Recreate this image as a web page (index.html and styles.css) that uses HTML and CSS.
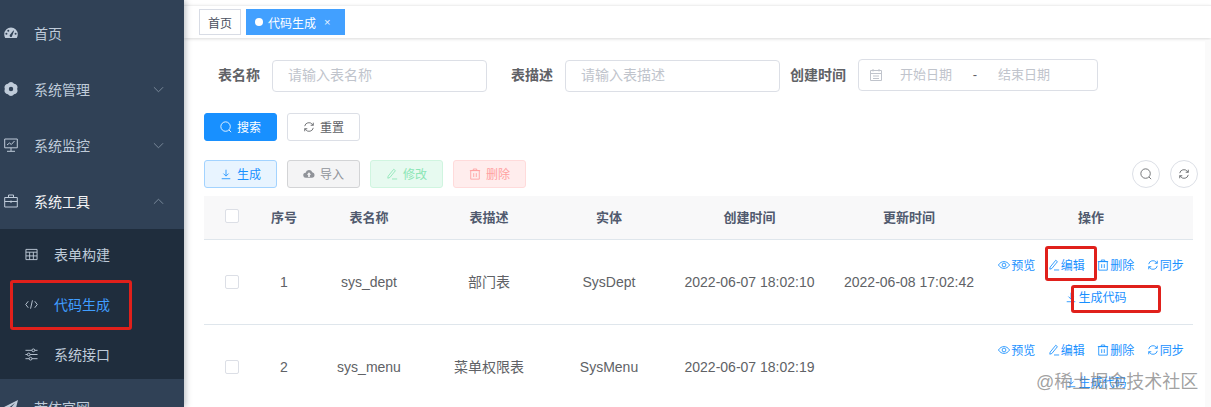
FILE: index.html
```html
<!DOCTYPE html>
<html lang="zh-CN">
<head>
    <meta charset="UTF-8">
    <title>代码生成</title>
    <link rel="stylesheet" href="styles.css">
</head>
<body>
    <svg class="sprite" width="0" height="0">
        <symbol id="i-search" viewBox="0 0 14 14"><circle cx="6.500" cy="6.500" r="5.500"/><path d="M10.500 10.500l2.500 2.500"/></symbol>
        <symbol id="i-refresh" viewBox="0 0 14 14"><path d="M2 6a5 5 0 0 1 8.800-2.200L12 5M12 2v3H9M12 8a5 5 0 0 1-8.800 2.200L2 9M2 12V9h3"/></symbol>
        <symbol id="i-download" viewBox="0 0 14 14"><path d="M7 2v7M4 6.500L7 9.500l3-3M2 12.500h10"/></symbol>
        <symbol id="i-edit" viewBox="0 0 14 14"><path d="M2.500 9.500L9 1.500l2 1.600-6.500 8-2.400.8zM7 12.800h6"/></symbol>
        <symbol id="i-delete" viewBox="0 0 14 14"><path d="M2 3h10v10H2zM1 3h12M5 3V1.200h4V3M5.500 6v4.500M8.500 6v4.500"/></symbol>
        <symbol id="i-view" viewBox="0 0 14 14"><path d="M.5 7C2.300 4.300 4.500 3 7 3s4.700 1.300 6.500 4C11.700 9.700 9.500 11 7 11S2.300 9.700.5 7z"/><circle cx="7" cy="7" r="2.200"/></symbol>
        <symbol id="i-date" viewBox="0 0 14 14"><path d="M1.500 2.500h11v10h-11zM1.500 5.500h11M4 1v2.500M10 1v2.500M4 8h6M4 10.500h6"/></symbol>
        <symbol id="i-down" viewBox="0 0 12 12"><path d="M1 3.500l5 5 5-5"/></symbol>
        <symbol id="i-up" viewBox="0 0 12 12"><path d="M1 8.500l5-5 5 5"/></symbol>
    </svg>

    <div class="app">
        <div class="sidebar">
            <div class="menu-item">
                <svg class="menu-icon" viewBox="0 0 14 14"><path class="solid" d="M7 1.500a6.800 6.800 0 0 0-6.800 6.800c0 1.500.4 2.700 1 3.700h11.600c.6-1 1-2.200 1-3.700A6.800 6.800 0 0 0 7 1.500zM2.400 8.800a1 1 0 1 1 0-2 1 1 0 0 1 0 2zm1.900-3a1 1 0 1 1 0-2 1 1 0 0 1 0 2zm3.500 5a1.400 1.400 0 0 1-2-1.800l3.600-4.600.7.300zm3.800-2a1 1 0 1 1 0-2 1 1 0 0 1 0 2z"/></svg>
                <span>首页</span>
            </div>
            <div class="menu-item">
                <svg class="menu-icon" viewBox="0.700 0.700 12.600 12.600"><path class="solid" fill-rule="evenodd" d="M9.750 2.240A3.300 3.300 0 0 1 12.500 7 3.300 3.300 0 0 1 9.750 11.760 3.300 3.300 0 0 1 4.250 11.760 3.300 3.300 0 0 1 1.500 7 3.300 3.300 0 0 1 4.250 2.240 3.300 3.300 0 0 1 9.750 2.240zM7 5a2 2 0 1 0 0 4 2 2 0 0 0 0-4z"/></svg>
                <span>系统管理</span>
                <svg class="chevron"><use href="#i-down"/></svg>
            </div>
            <div class="menu-item">
                <svg class="menu-icon" viewBox="0 0 14 14"><path d="M.7 1h12.600v8.800H.7zM7 9.800v3.400M3 13.300h8M3 7l2.500-2 1.800 1.500L10.500 3"/></svg>
                <span>系统监控</span>
                <svg class="chevron"><use href="#i-down"/></svg>
            </div>
            <div class="menu-item open">
                <svg class="menu-icon" viewBox="0 0 14 14"><path d="M.7 3.500h12.600v9.500H.7zM4.500 3.500V1h5v2.500M.7 7.500h12.600M7 6.500v2.500"/></svg>
                <span>系统工具</span>
                <svg class="chevron"><use href="#i-up"/></svg>
            </div>
            <div class="submenu">
                <div class="sub-item">
                    <svg class="sub-icon" viewBox="0 0 14 14"><path d="M1 1.500h12v11H1zM1 4.500h12M1 8.500h12M5 4.500v8M9 4.500v8"/></svg>
                    <span>表单构建</span>
                </div>
                <div class="sub-item active">
                    <svg class="sub-icon" viewBox="0 0 14 14"><path d="M3.500 3.500L.8 7l2.700 3.500M10.500 3.500L13.200 7l-2.700 3.500M8 2.500L6 11.500"/></svg>
                    <span>代码生成</span>
                </div>
                <div class="sub-item">
                    <svg class="sub-icon" viewBox="0 0 14 14"><path d="M.5 2.500h13M.5 7h13M.5 11.500h13"/><circle class="knob" cx="9" cy="2.500" r="1.500"/><circle class="knob" cx="4" cy="7" r="1.500"/><circle class="knob" cx="6" cy="11.500" r="1.500"/></svg>
                    <span>系统接口</span>
                </div>
            </div>
            <div class="menu-item">
                <svg class="menu-icon" viewBox="0 0 14 14"><path class="solid" d="M14 0L0 7l3.800 1.500L11 3 5.500 9.500V14l2.400-3 3 1.200z"/></svg>
                <span>若依官网</span>
            </div>
        </div>

        <div class="main">
            <div class="tags-bar">
                <span class="tag">首页</span>
                <span class="tag tag-active"><i class="tag-dot"></i>代码生成<em class="tag-close">×</em></span>
            </div>

            <div class="content">
                <div class="search-form">
                    <label>表名称</label>
                    <div class="input">请输入表名称</div>
                    <label>表描述</label>
                    <div class="input">请输入表描述</div>
                    <label>创建时间</label>
                    <div class="input date-range">
                        <svg class="ic date-icon"><use href="#i-date"/></svg>
                        <span class="date-cell">开始日期</span>
                        <span class="date-sep">-</span>
                        <span class="date-cell">结束日期</span>
                    </div>
                </div>

                <div class="btn-row search-btns">
                    <div class="btn btn-primary"><svg class="ic"><use href="#i-search"/></svg>搜索</div>
                    <div class="btn"><svg class="ic"><use href="#i-refresh"/></svg>重置</div>
                </div>

                <div class="btn-row tool-btns">
                    <div class="btn plain-blue"><svg class="ic"><use href="#i-download"/></svg>生成</div>
                    <div class="btn plain-gray">
                        <svg class="ic" viewBox="0 0 14 14"><path class="solid" fill-rule="evenodd" d="M3.500 11.500a3 3 0 0 1-.4-6A4 4 0 0 1 10.800 5a3.300 3.300 0 0 1 0 6.500zM7 5L4.500 8H6v2.500h2V8h1.500z"/></svg>导入
                    </div>
                    <div class="btn plain-green"><svg class="ic"><use href="#i-edit"/></svg>修改</div>
                    <div class="btn plain-red"><svg class="ic"><use href="#i-delete"/></svg>删除</div>
                    <div class="tool-right">
                        <div class="circle-btn"><svg class="ic"><use href="#i-search"/></svg></div>
                        <div class="circle-btn"><svg class="ic"><use href="#i-refresh"/></svg></div>
                    </div>
                </div>

                <table class="gen-table">
                    <colgroup>
                        <col class="c-check"><col class="c-no"><col class="c-name"><col class="c-desc">
                        <col class="c-entity"><col class="c-create"><col class="c-update"><col class="c-ops">
                    </colgroup>
                    <thead>
                        <tr>
                            <th><i class="check"></i></th>
                            <th>序号</th>
                            <th>表名称</th>
                            <th>表描述</th>
                            <th>实体</th>
                            <th>创建时间</th>
                            <th>更新时间</th>
                            <th>操作</th>
                        </tr>
                    </thead>
                    <tbody>
                        <tr>
                            <td><i class="check"></i></td>
                            <td>1</td>
                            <td>sys_dept</td>
                            <td class="td-cn">部门表</td>
                            <td>SysDept</td>
                            <td>2022-06-07 18:02:10</td>
                            <td>2022-06-08 17:02:42</td>
                            <td class="td-ops">
                                <div class="ops-line">
                                    <a><svg class="ic"><use href="#i-view"/></svg>预览</a>
                                    <a><svg class="ic"><use href="#i-edit"/></svg>编辑</a>
                                    <a><svg class="ic"><use href="#i-delete"/></svg>删除</a>
                                    <a><svg class="ic"><use href="#i-refresh"/></svg>同步</a>
                                </div>
                                <div class="ops-line ops-gen">
                                    <a><svg class="ic"><use href="#i-download"/></svg>生成代码</a>
                                </div>
                            </td>
                        </tr>
                        <tr>
                            <td><i class="check"></i></td>
                            <td>2</td>
                            <td>sys_menu</td>
                            <td class="td-cn">菜单权限表</td>
                            <td>SysMenu</td>
                            <td>2022-06-07 18:02:19</td>
                            <td></td>
                            <td class="td-ops">
                                <div class="ops-line">
                                    <a><svg class="ic"><use href="#i-view"/></svg>预览</a>
                                    <a><svg class="ic"><use href="#i-edit"/></svg>编辑</a>
                                    <a><svg class="ic"><use href="#i-delete"/></svg>删除</a>
                                    <a><svg class="ic"><use href="#i-refresh"/></svg>同步</a>
                                </div>
                                <div class="ops-line ops-gen">
                                    <a><svg class="ic"><use href="#i-download"/></svg>生成代码</a>
                                </div>
                            </td>
                        </tr>
                    </tbody>
                </table>
            </div>
            <div class="scroll-track"></div>
        </div>
    </div>

    <!-- red marks drawn over the screenshot -->
    <div class="mark mark-menu"></div>
    <div class="mark mark-edit"></div>
    <div class="mark mark-gen"></div>
    <div class="watermark">@稀土掘金技术社区</div>
</body>
</html>
```

FILE: styles.css
```css
* {
    box-sizing: border-box;
}

html, body {
    margin: 0;
    padding: 0;
    height: 407px;
    overflow: hidden;
}

body {
    font-family: "Liberation Sans", "Noto Sans CJK SC", sans-serif;
    font-size: 14px;
    color: #606266;
    background-color: #fff;
}

.sprite {
    display: none;
}

.app {
    display: flex;
    height: 407px;
}

/* sidebar */
.sidebar {
    flex: none;
    width: 184px;
    padding-top: 5px;
    background-color: #304156;
    color: #bfcbd9;
    overflow: hidden;
    box-shadow: 2px 0 6px rgba(0, 21, 41, .25);
    z-index: 2;
}

.menu-item {
    display: flex;
    align-items: center;
    height: 56px;
    padding-left: 4px;
    flex: none;
}

.menu-item.open {
    color: #f4f4f5;
}

.menu-icon {
    flex: none;
    width: 14px;
    height: 14px;
    margin-right: 16px;
    fill: none;
    stroke: #bfcbd9;
    stroke-width: 1;
}

.solid {
    fill: #bfcbd9;
    stroke: none;
}

.chevron {
    width: 11px;
    height: 11px;
    margin-left: 63px;
    fill: none;
    stroke: #7f8ea0;
    stroke-width: 1;
}

.submenu {
    height: 150px;
    background-color: #1f2d3d;
}

.sub-item {
    display: flex;
    align-items: center;
    height: 50px;
    padding-left: 25px;
}

.sub-item.active {
    color: #409eff;
}

.sub-icon {
    flex: none;
    width: 13px;
    height: 13px;
    margin-right: 16px;
    fill: none;
    stroke: #bfcbd9;
    stroke-width: 1;
}

.knob {
    fill: #1f2d3d;
}

/* right side */
.main {
    position: relative;
    flex: 1;
    min-width: 0;
}

.tags-bar {
    display: flex;
    gap: 5px;
    height: 33px;
    margin-top: 5px;
    padding: 3px 0 0 15px;
    border-top: 1px solid #f0f0f0;
    box-shadow: 0 1px 3px rgba(0, 0, 0, .15);
}

.tag {
    display: flex;
    align-items: center;
    height: 26px;
    padding: 0 8px;
    border: 1px solid #d8dce5;
    font-size: 12px;
    color: #495060;
}

.tag-active {
    width: 99px;
    border-color: #42a0ff;
    background-color: #42a0ff;
    color: #fff;
}

.tag-dot {
    width: 8px;
    height: 8px;
    margin-right: 5px;
    border-radius: 50%;
    background-color: #fff;
}

.tag-close {
    margin-left: 8px;
    font-style: normal;
    font-size: 11px;
    color: #e6f2ff;
}

.content {
    padding: 22px 18px 0 20px;
}

.search-form {
    display: flex;
    align-items: center;
    padding-left: 14px;
}

.search-form label {
    margin-right: 12px;
    padding-bottom: 5px;
    font-weight: bold;
    color: #606266;
}

.input {
    width: 215px;
    height: 32px;
    margin-right: 24px;
    padding-left: 15px;
    line-height: 28px;
    border: 1px solid #dcdfe6;
    border-radius: 4px;
    color: #c0c4cc;
}

.input + label + .input + label {
    margin-left: -14px;
}

.date-range {
    display: flex;
    align-items: center;
    flex: none;
    width: 240px;
    margin: -2px 0 0;
    padding-left: 10px;
    font-size: 13px;
}

.date-range .date-icon {
    width: 14px;
    height: 14px;
    margin-right: 17px;
}

.date-cell {
    width: 52px;
}

.date-sep {
    width: 46px;
    text-align: center;
    color: #606266;
}

.btn-row {
    display: flex;
    gap: 10px;
}

.search-btns {
    margin-top: 21px;
}

.tool-btns {
    margin-top: 19px;
}

.btn {
    display: flex;
    align-items: center;
    justify-content: center;
    width: 73px;
    height: 28px;
    padding-bottom: 1px;
    border: 1px solid #dcdfe6;
    border-radius: 3px;
    font-size: 12px;
    color: #606266;
}

.ic {
    flex: none;
    width: 12px;
    height: 12px;
    margin-right: 5px;
    fill: none;
    stroke: currentColor;
    stroke-width: 1;
}

.ic .solid {
    fill: currentColor;
}

.btn-primary {
    border-color: #1890ff;
    background-color: #1890ff;
    color: #fff;
}

.plain-blue {
    border-color: #a3d3ff;
    background-color: #e8f4ff;
    color: #1890ff;
}

.plain-gray {
    border-color: #d3d4d6;
    background-color: #f4f4f5;
    color: #909399;
}

.plain-green {
    border-color: #d0f5e0;
    background-color: #e7faf0;
    color: #8ce6b6;
}

.plain-red {
    border-color: #ffdbdb;
    background-color: #ffeded;
    color: #ffa0a0;
}

.tool-right {
    display: flex;
    gap: 10px;
    margin-left: auto;
    margin-right: -5px;
}

.circle-btn {
    display: flex;
    align-items: center;
    justify-content: center;
    width: 28px;
    height: 28px;
    border: 1px solid #dcdfe6;
    border-radius: 50%;
    color: #606266;
}

.circle-btn .ic {
    margin-right: 0;
}

/* table */
.gen-table {
    width: 989px;
    margin-top: 8px;
    table-layout: fixed;
    border-collapse: collapse;
}

.c-check { width: 56px; }
.c-no { width: 48px; }
.c-name { width: 122px; }
.c-desc { width: 118px; }
.c-entity { width: 122px; }
.c-create { width: 159px; }
.c-update { width: 160px; }
.c-ops { width: 204px; }

.gen-table th {
    height: 43px;
    padding: 0 0 2px;
    background-color: #f8f8f9;
    border-bottom: 1px solid #dfe6ec;
    font-size: 13px;
    color: #515a6e;
}

.gen-table td {
    height: 85px;
    padding: 0;
    text-align: center;
    border-bottom: 1px solid #dfe6ec;
}

.gen-table .td-cn {
    padding-bottom: 2px;
}

.gen-table .td-ops {
    padding-bottom: 2px;
}

.check {
    display: block;
    width: 14px;
    height: 14px;
    margin: 0 auto;
    border: 1px solid #dcdfe6;
    border-radius: 2px;
    background-color: #fff;
}

.ops-line {
    display: flex;
    justify-content: center;
    gap: 12.5px;
    height: 32px;
    align-items: center;
    font-size: 12px;
    color: #1890ff;
}

.ops-gen {
    padding-left: 10px;
}

.ops-line a {
    display: flex;
    align-items: center;
}

.ops-line .ic {
    margin-right: 1px;
}

.scroll-track {
    position: absolute;
    top: 40px;
    right: 0;
    bottom: 0;
    width: 6px;
    background-color: #fafafa;
}

/* overlays */
.mark {
    position: absolute;
    border: 3px solid #e0201b;
    border-radius: 3px;
    z-index: 3;
}

.mark-menu {
    left: 10px;
    top: 280px;
    width: 122px;
    height: 50px;
}

.mark-edit {
    left: 1045px;
    top: 246px;
    width: 52px;
    height: 35px;
}

.mark-gen {
    left: 1071px;
    top: 285px;
    width: 90px;
    height: 28px;
}

.watermark {
    position: absolute;
    left: 1036px;
    top: 370px;
    font-size: 18px;
    line-height: 24px;
    color: rgba(120, 120, 120, .7);
    z-index: 3;
}
```
